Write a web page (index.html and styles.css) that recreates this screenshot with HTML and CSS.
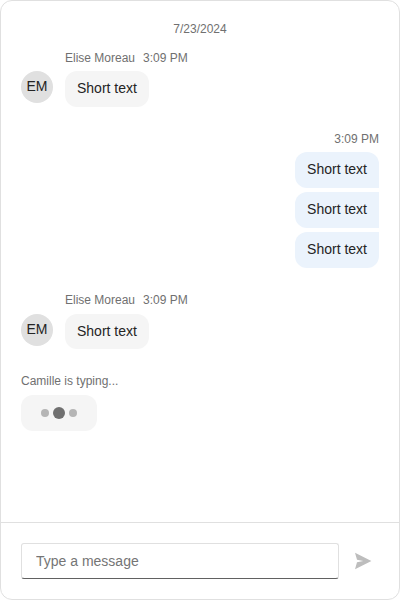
FILE: index.html
```html
<!DOCTYPE html>
<html lang="en">
<head>
<meta charset="utf-8">
<title>Chat</title>
<link rel="stylesheet" href="styles.css">
</head>
<body>
<div class="chat">
  <div class="messages">
    <div class="date">7/23/2024</div>
    <div class="group">
      <div class="meta"><span>Elise Moreau</span><span>3:09 PM</span></div>
      <div class="row"><div class="avatar">EM</div><div class="bubble">Short text</div></div>
    </div>
    <div class="group own">
      <div class="meta"><span>3:09 PM</span></div>
      <div class="bubble">Short text</div>
      <div class="bubble">Short text</div>
      <div class="bubble">Short text</div>
    </div>
    <div class="group second">
      <div class="meta"><span>Elise Moreau</span><span>3:09 PM</span></div>
      <div class="row"><div class="avatar">EM</div><div class="bubble">Short text</div></div>
    </div>
    <div class="typing">Camille is typing...</div>
    <div class="dots"><i></i><i class="big"></i><i></i></div>
  </div>
  <form class="composer">
    <input class="field" type="text" placeholder="Type a message">
    <button class="send" type="button" aria-label="Send"><svg width="18" height="18" viewBox="0 0 18 18"><path d="M1 .8 17.4 9 1 17.2 3 10.2 9.3 9 3 7.8Z" fill="#bdbdbd"/></svg></button>
  </form>
</div>
</body>
</html>
```
FILE: styles.css
```css
* { box-sizing: border-box; }
body { margin: 0; background: #fff; color: #242424; font: 14px/20px "Liberation Sans", Arial, sans-serif; }
.chat { display: flex; flex-direction: column; width: 400px; height: 600px; border: 1px solid #e0e0e0; border-radius: 12px; overflow: hidden; }
.messages { flex: 1; display: flex; flex-direction: column; padding: 20px 20px 0; }
.date { height: 16px; text-align: center; }
.date, .meta, .typing { font-size: 12px; line-height: 16px; color: #707070; }
.group { display: flex; flex-direction: column; margin-top: 13px; }
.meta { display: flex; gap: 8px; margin: 0 0 5px 44px; }
.row { display: flex; gap: 12px; }
.avatar { width: 32px; height: 32px; border-radius: 50%; background: #e0e0e0; text-align: center; line-height: 30px; }
.bubble { height: 36px; padding: 7px 12px 9px; border-radius: 12px; background: #f5f5f5; }
.own { align-items: flex-end; gap: 4px; margin-top: 24px; }
.own .meta { margin: 0 0 1px; }
.own .bubble { background: #ebf3fc; border-radius: 12px 0 0 12px; }
.own .bubble:nth-child(2) { border-top-right-radius: 12px; }
.own .bubble:last-child { border-bottom-right-radius: 12px; }
.second { margin-top: 24px; }
.second .meta { margin-bottom: 6px; }
.second .bubble { height: 35px; }
.typing { margin-top: 24px; }
.dots { display: flex; align-items: center; justify-content: center; gap: 4px; width: 76px; height: 36px; margin-top: 6px; border-radius: 12px; background: #f5f5f5; }
.dots i { width: 8px; height: 8px; border-radius: 50%; background: #b5b5b5; }
.dots .big { width: 12px; height: 12px; background: #707070; }
.composer { display: flex; align-items: center; gap: 8px; height: 77px; padding: 0 20px; border-top: 1px solid #e0e0e0; }
.field { flex: 1; height: 36px; padding: 0 14px; border: 1px solid #e0e0e0; border-bottom-color: #616161; border-radius: 3px; font: inherit; background: #fff; outline: 0; }
.field::placeholder { color: #757575; opacity: 1; }
.send { display: flex; align-items: center; justify-content: center; width: 32px; height: 32px; padding: 0; border: 0; background: none; }
```
